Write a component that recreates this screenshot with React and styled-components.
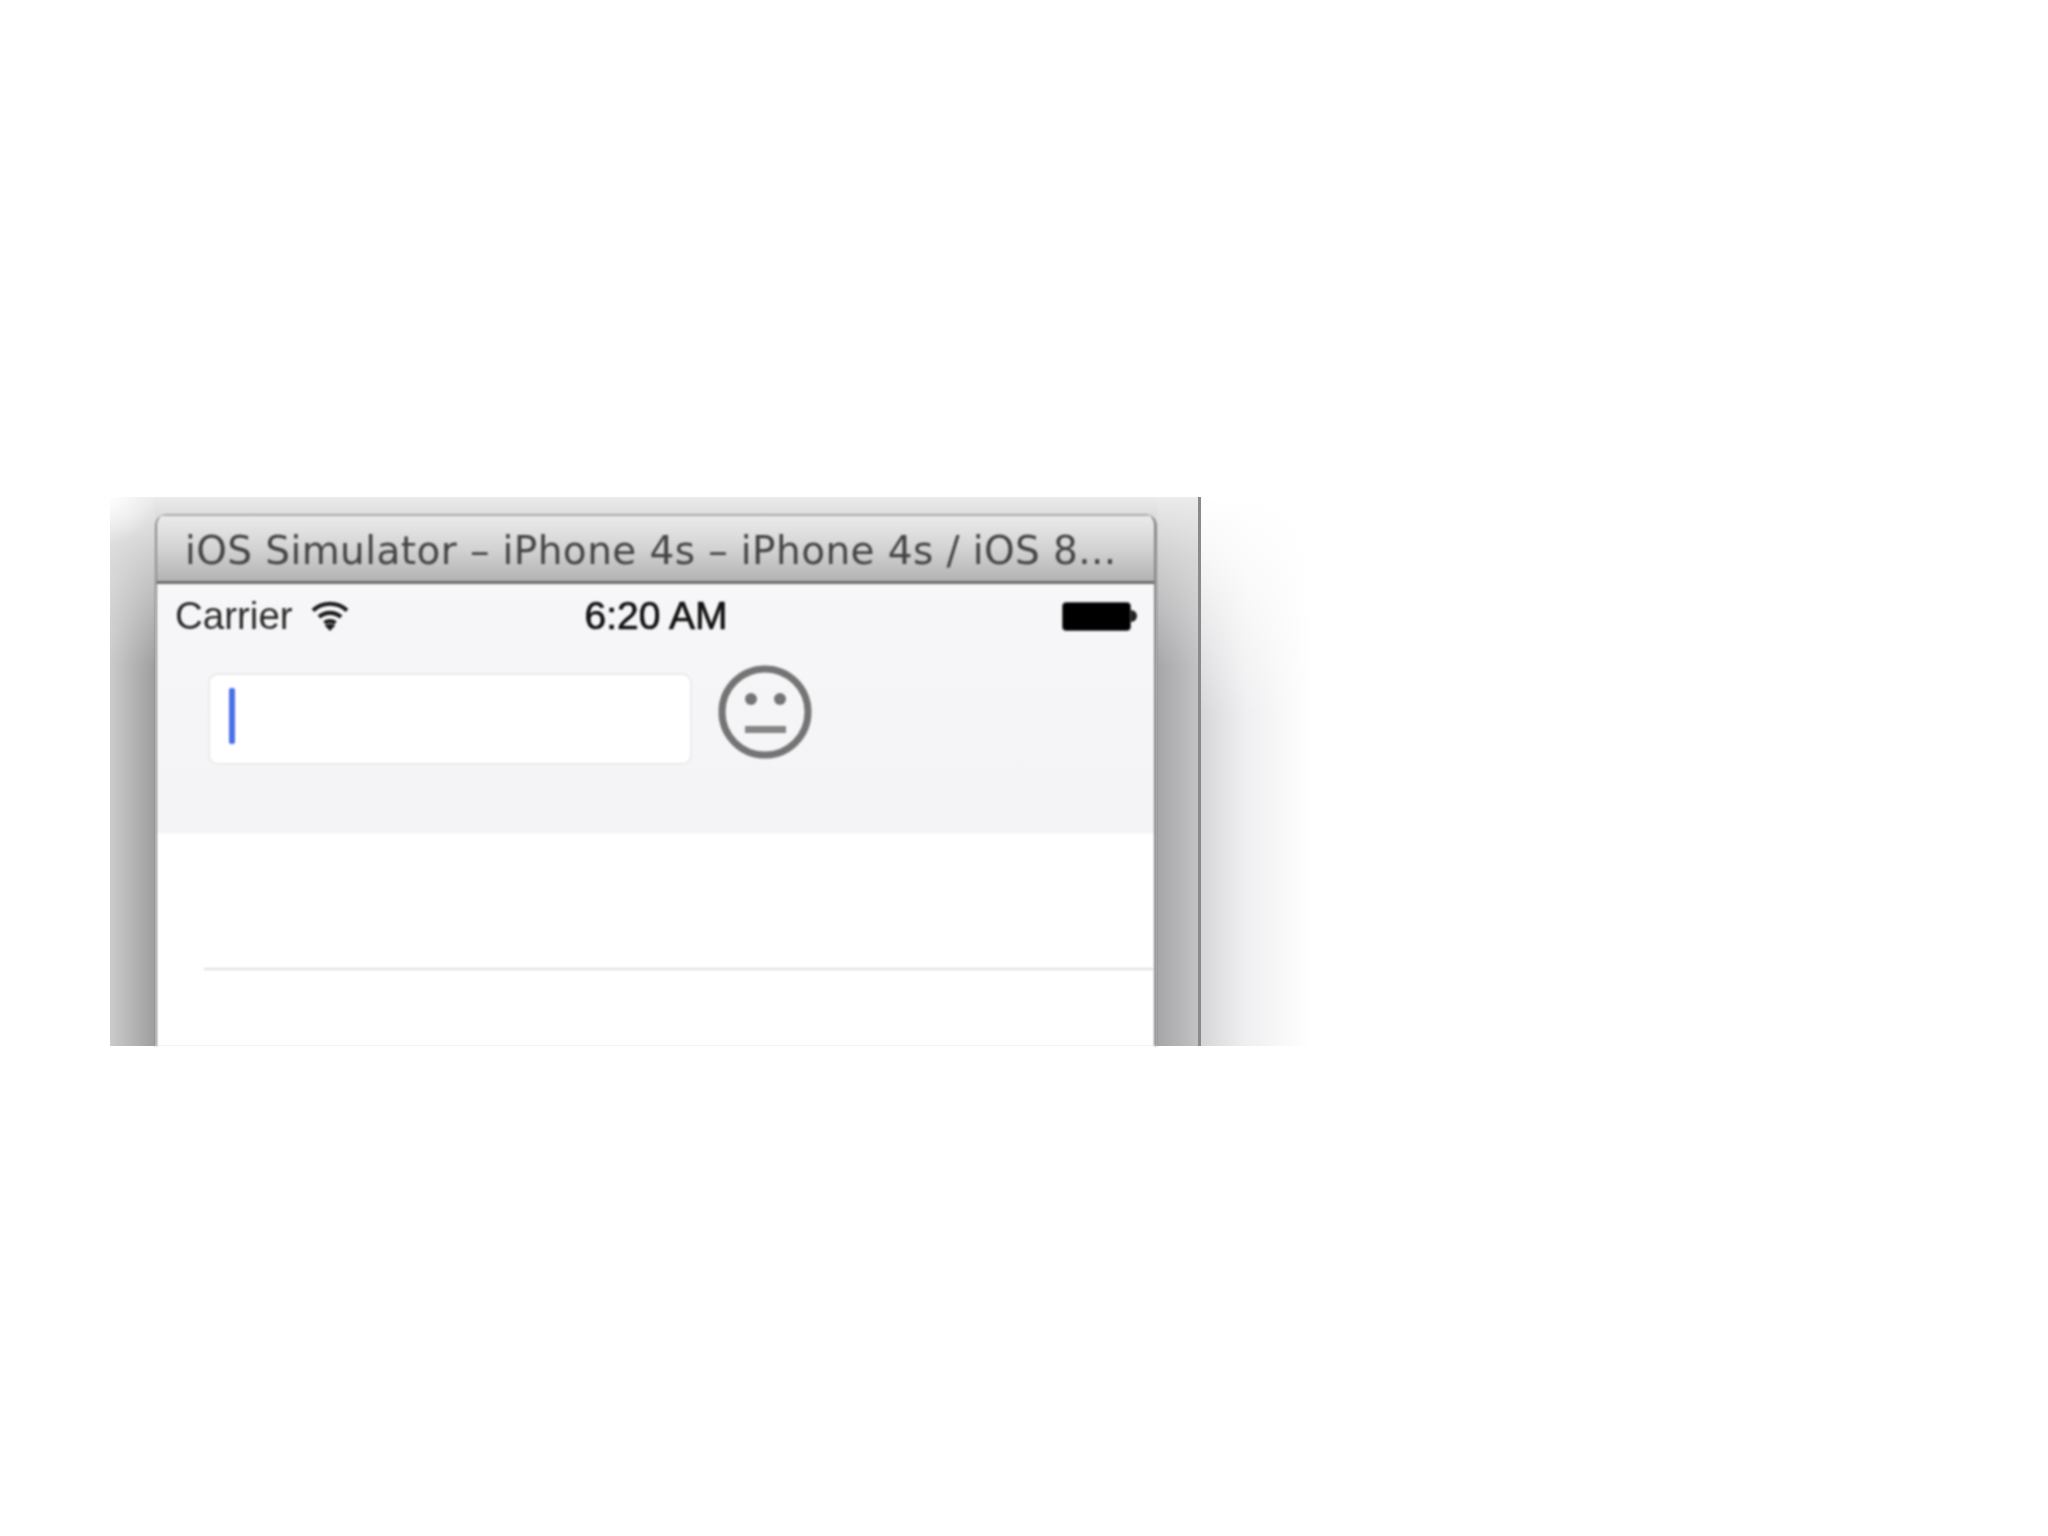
import React from "react";
import styled, { createGlobalStyle } from "styled-components";

const Global = createGlobalStyle`
  html, body { margin: 0; padding: 0; background: #fff; }
  body { width: 2048px; height: 1536px; overflow: hidden; }
`;

const Page = styled.div`
  padding: 497px 0 0 110px;
`;

const Shot = styled.div`
  display: flex;
  height: 549px;
`;

const LeftGutter = styled.div`
  width: 45px;
  background:
    radial-gradient(circle at 0 0, rgba(255,255,255,.95), rgba(255,255,255,0) 46px),
    linear-gradient(to bottom, #ebebeb 0, rgba(225,225,225,.7) 60px, rgba(225,225,225,0) 170px),
    linear-gradient(to right, #cbcbcb, #9e9e9e);
`;

const Center = styled.div`
  width: 1002px;
  display: flex;
  flex-direction: column;
  background: linear-gradient(to bottom, #ebebeb, #dedede 17px);
`;

const TopStrip = styled.div`
  height: 17px;
  flex: none;
`;

const Window = styled.div`
  flex: 1;
  display: flex;
  flex-direction: column;
  border-left: 2px solid #8b8b8d;
  border-right: 3px solid #8b8b8d;
  border-radius: 12px 12px 0 0;
  overflow: hidden;
  background: #fff;
  filter: blur(0.8px);
`;

const TitleBar = styled.div`
  height: 70px;
  flex: none;
  display: flex;
  align-items: center;
  padding: 4px 0 0 28px;
  box-sizing: border-box;
  border-top: 2px solid #a9a9a9;
  border-bottom: 3px solid #6d6d6d;
  background: linear-gradient(to bottom, #ebebeb, #d6d6d6 45%, #b3b3b3);
  color: #444;
  font: 400 39px "DejaVu Sans", sans-serif;
  letter-spacing: 0.4px;
  white-space: nowrap;
`;

const NavArea = styled.div`
  height: 249px;
  flex: none;
  background: linear-gradient(to bottom, #f7f7f9, #f4f4f6);
`;

const StatusBar = styled.div`
  height: 64px;
  display: grid;
  grid-template-columns: 1fr auto 1fr;
  align-items: center;
  padding: 0 17px 0 18px;
  font-family: "Liberation Sans", Arial, sans-serif;
  font-size: 38.5px;
  color: #2a2a2a;
`;

const Carrier = styled.div`
  display: flex;
  align-items: center;
  gap: 18px;
`;

const Clock = styled.div`
  color: #111;
  font-size: 39px;
  -webkit-text-stroke: 0.7px #111;
`;

const Battery = styled.div`
  justify-self: end;
  display: flex;
  align-items: center;
`;

const BatteryBody = styled.div`
  width: 69px;
  height: 29px;
  background: #000;
  border: 1px solid #555;
  box-sizing: border-box;
  border-radius: 4px;
`;

const BatteryTip = styled.div`
  width: 6px;
  height: 12px;
  background: #222;
  border-radius: 0 6px 6px 0;
`;

const FieldRow = styled.div`
  display: flex;
  align-items: flex-start;
  padding: 17px 0 0 51px;
  gap: 26px;
`;

const Field = styled.div`
  width: 484px;
  height: 92px;
  margin-top: 8px;
  box-sizing: border-box;
  background: #fff;
  border: 2px solid #ebebed;
  border-radius: 10px;
  padding: 13px 0 0 19px;
`;

const Caret = styled.div`
  width: 6px;
  height: 56px;
  border-radius: 2px;
  background: #4a70e8;
`;

const TableArea = styled.div`
  flex: 1;
  background: #fff;
`;

const Row = styled.div`
  height: 135px;
  margin: 0 1px 0 47px;
  border-bottom: 2px solid #dedee4;
`;

const RightGutter = styled.div`
  width: 41px;
  background:
    linear-gradient(to bottom, #ebebeb 0, rgba(225,225,225,.7) 60px, rgba(225,225,225,0) 170px),
    linear-gradient(to right, #a6a6a9, #c2c2c4);
`;

const Divider = styled.div`
  width: 3px;
  background: #8a8a8c;
`;

const Fade = styled.div`
  width: 110px;
  background:
    linear-gradient(to bottom, #fff 0, rgba(255,255,255,.8) 60px, rgba(255,255,255,0) 220px),
    linear-gradient(to right, #d6d6d9, #efeff1 40%, #fff);
`;

const Wifi = () => (
  <svg width="38" height="32" viewBox="0 0 38 32" fill="none" stroke="#1c1c1c" strokeWidth="4.2">
    <path d="M2 10.5C11.5 1.5 26.500 1.500 36 10.500" />
    <path d="M8 17C14 11.500 24 11.500 30 17" />
    <path d="M13.500 23C16.500 20.500 21.500 20.500 24.500 23" />
    <path d="M19 31L13.800 25.500C16.500 23.500 21.500 23.500 24.200 25.500Z" fill="#1c1c1c" stroke="none" />
  </svg>
);

const Smiley = () => (
  <svg width="94" height="94" viewBox="0 0 94 94" fill="none">
    <circle cx="47" cy="47" r="43" stroke="#747474" strokeWidth="7" />
    <circle cx="33" cy="34" r="6" fill="#747474" />
    <circle cx="62" cy="34" r="6" fill="#747474" />
    <path d="M27 64.500H68" stroke="#858585" strokeWidth="7" />
  </svg>
);

export default function App() {
  return (
    <>
      <Global />
      <Page>
        <Shot>
          <LeftGutter />
          <Center>
            <TopStrip />
            <Window>
              <TitleBar>iOS Simulator – iPhone 4s – iPhone 4s / iOS 8...</TitleBar>
              <NavArea>
                <StatusBar>
                  <Carrier>
                    Carrier
                    <Wifi />
                  </Carrier>
                  <Clock>6:20 AM</Clock>
                  <Battery>
                    <BatteryBody />
                    <BatteryTip />
                  </Battery>
                </StatusBar>
                <FieldRow>
                  <Field>
                    <Caret />
                  </Field>
                  <Smiley />
                </FieldRow>
              </NavArea>
              <TableArea>
                <Row />
              </TableArea>
            </Window>
          </Center>
          <RightGutter />
          <Divider />
          <Fade />
        </Shot>
      </Page>
    </>
  );
}
